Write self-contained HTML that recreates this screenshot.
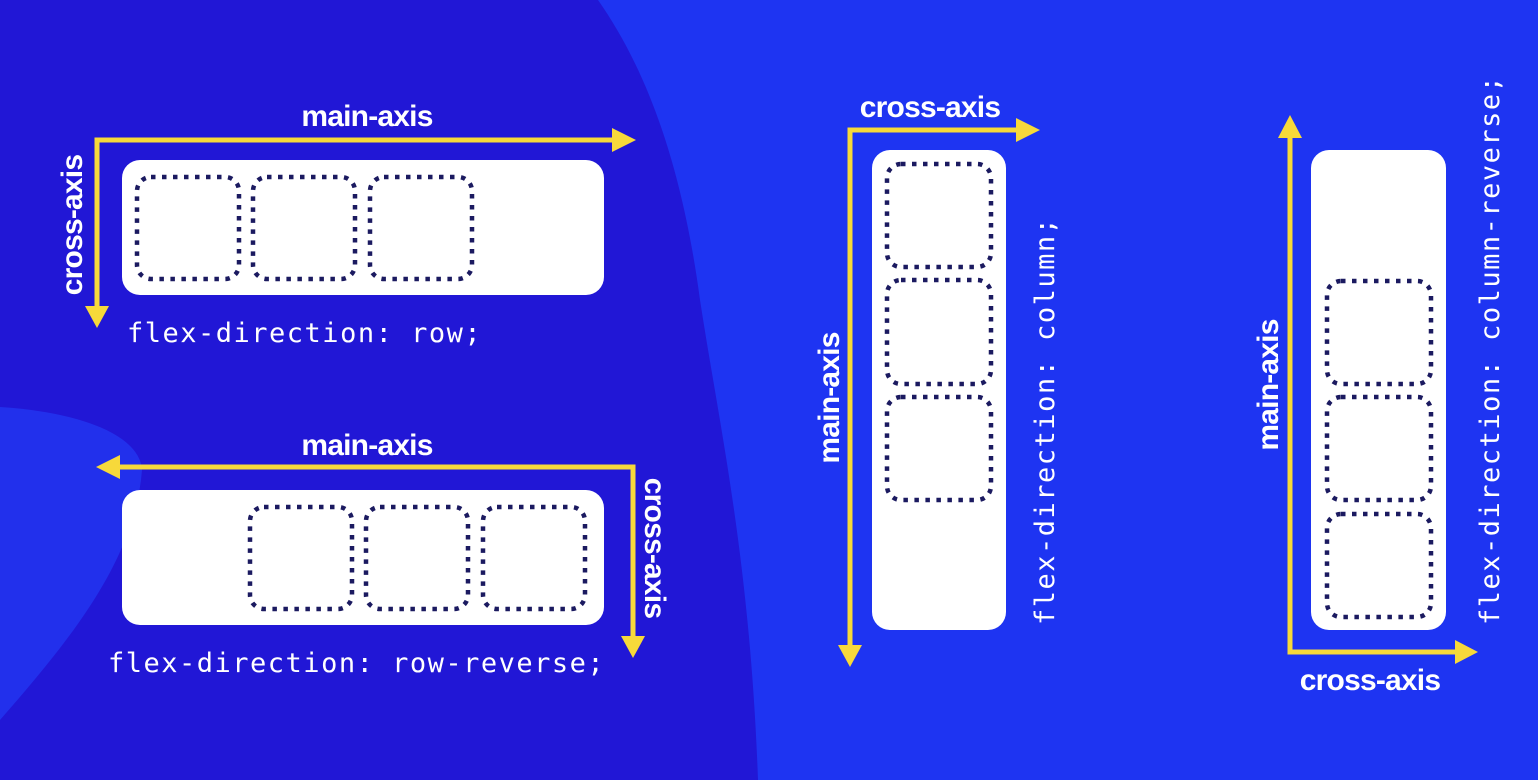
<!DOCTYPE html>
<html><head><meta charset="utf-8"><style>
html,body{margin:0;padding:0;width:1538px;height:780px;overflow:hidden;background:#1e34f2}
svg{display:block}
.lbl{font-family:"Liberation Sans",sans-serif;font-weight:bold;font-size:30px;fill:#fff;letter-spacing:-0.8px}
.code{font-family:"DejaVu Sans Mono","Liberation Mono",monospace;font-size:27px;fill:#fff;letter-spacing:1.5px}
</style></head><body>
<svg width="1538" height="780" viewBox="0 0 1538 780" xmlns="http://www.w3.org/2000/svg">
<rect width="1538" height="780" fill="#1e34f2"/>
<path d="M0,0 L598,0 C640,60 680,150 700,300 C720,430 750,560 758,780 L0,780 Z" fill="#2117d6"/>
<path d="M0,407 C80,412 140,435 142,470 C135,560 70,640 0,720 Z" fill="#2230ec"/>
<g fill="#fff">
<rect x="122" y="160" width="482" height="135" rx="18"/>
<rect x="122" y="490" width="482" height="135" rx="18"/>
<rect x="872" y="150" width="134" height="480" rx="18"/>
<rect x="1311" y="150" width="135" height="480" rx="18"/>
</g>
<g fill="none" stroke="#1b1a60" stroke-width="4.5" stroke-dasharray="4.5 6.5">
<rect x="137" y="177" width="102" height="102" rx="14"/>
<rect x="253" y="177" width="102" height="102" rx="14"/>
<rect x="370" y="177" width="102" height="102" rx="14"/>
<rect x="250" y="507" width="102" height="102" rx="14"/>
<rect x="366" y="507" width="102" height="102" rx="14"/>
<rect x="483" y="507" width="102" height="102" rx="14"/>
<rect x="887" y="164" width="104" height="103" rx="14"/>
<rect x="887" y="280" width="104" height="104" rx="14"/>
<rect x="887" y="397" width="104" height="103" rx="14"/>
<rect x="1327" y="281" width="104" height="103" rx="14"/>
<rect x="1327" y="397" width="104" height="103" rx="14"/>
<rect x="1327" y="514" width="104" height="103" rx="14"/>
</g>
<g fill="none" stroke="#f7d93a" stroke-width="5">
<path d="M97,312 V140 H620"/>
<path d="M112,467 H633 V642"/>
<path d="M850,650 V130 H1024"/>
<path d="M1290,132 V652 H1462"/>
</g>
<g fill="#f7d93a">
<path d="M636,140 L612,128 L612,152 Z"/>
<path d="M97,328 L85,306 L109,306 Z"/>
<path d="M96,467 L120,455 L120,479 Z"/>
<path d="M633,658 L621,636 L645,636 Z"/>
<path d="M1040,130 L1016,118 L1016,142 Z"/>
<path d="M850,667 L838,645 L862,645 Z"/>
<path d="M1290,115 L1278,138 L1302,138 Z"/>
<path d="M1478,652 L1455,640 L1455,664 Z"/>
</g>
<text class="lbl" x="367" y="126" text-anchor="middle">main-axis</text>
<text class="lbl" x="367" y="455" text-anchor="middle">main-axis</text>
<text class="lbl" x="930" y="117" text-anchor="middle">cross-axis</text>
<text class="lbl" x="1370" y="690" text-anchor="middle">cross-axis</text>
<text class="lbl" transform="translate(82,225) rotate(-90)" text-anchor="middle">cross-axis</text>
<text class="lbl" transform="translate(645,548) rotate(90)" text-anchor="middle">cross-axis</text>
<text class="lbl" transform="translate(839,398) rotate(-90)" text-anchor="middle">main-axis</text>
<text class="lbl" transform="translate(1278,385) rotate(-90)" text-anchor="middle">main-axis</text>
<text class="code" x="127" y="342">flex-direction: row;</text>
<text class="code" x="108" y="672">flex-direction: row-reverse;</text>
<text class="code" transform="translate(1054,625) rotate(-90)">flex-direction: column;</text>
<text class="code" transform="translate(1499,625) rotate(-90)">flex-direction: column-reverse;</text>
</svg>
</body></html>
